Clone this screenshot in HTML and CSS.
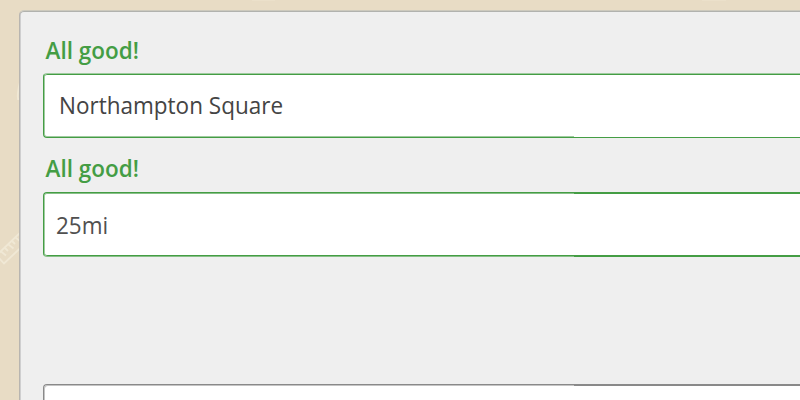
FILE: index.html
```html
<!DOCTYPE html>
<html lang="en">
<head>
<meta charset="utf-8">
<title>Location search</title>
<link rel="stylesheet" href="styles.css">
</head>
<body>
<svg class="doodles" width="800" height="400" viewBox="0 0 800 400" aria-hidden="true">
<path d="M-2 257 L4 263.5 L24 244.5 M-2 254 L24 229 M1 251.5 l5 4 M5 248 l3 3 M8.500 244.500 l5 4 M12 241 l3 3 M15.500 237.500 l5 4"/>
<path d="M20 82 Q17 94 18 99 L22 99"/>
<path class="thin" d="M252 .5 H275 M702 .5 H726"/>
</svg>
<main class="panel">
<form class="form">
<label class="message" for="place">All good!</label>
<div class="field place"><input id="place" type="text" value="Northampton Square"></div>
<label class="message" for="radius">All good!</label>
<div class="field radius"><input id="radius" type="text" value="25mi"></div>
<div class="field next"></div>
</form>
</main>
</body>
</html>
```
FILE: styles.css
```css
* { box-sizing: border-box; }
body {
  display: flow-root;
  margin: 0;
  height: 400px;
  overflow: hidden;
  background: #e8dcc5;
  font-family: "Open Sans", sans-serif;
}
.doodles {
  position: absolute;
  inset: 0;
  fill: none;
  stroke: #f0e8d5;
  stroke-width: 1.8;
}
.doodles .thin { stroke: #ebe0ca; stroke-width: 1; }
.panel {
  position: relative;
  height: 390px;
  margin: 10px 0 0 19px;
  padding: 24px 0 0 22px;
  border: solid;
  border-width: 1px 0 0 1px;
  border-color: #ccc9bd #b7b7b7 #b7b7b7 #b8b5b0;
  border-radius: 5px 0 0 0;
  background: #efefef;
  box-shadow: inset 0 1px #b1b2ae, inset 1px 0 #cfcfd0;
}
.form { display: flex; flex-direction: column; padding-left: 1px; }
.message {
  height: 30px;
  padding-left: 2.5px;
  color: #449d44;
  font-size: 22.5px;
  font-weight: 600;
  line-height: 30px;
  transform: translateY(.3px) scaleY(1.07);
}
.field {
  position: relative;
  height: 65px;
  border: 1px solid #449d44;
  border-right: 0;
  border-radius: 4px 0 0 4px;
  background: #fff;
}
.field input {
  display: block;
  width: 100%;
  height: 61px;
  padding: 0 15px;
  border: 0;
  outline: 0;
  background: none;
  color: #444;
  font: 400 22.5px/30px "Open Sans", sans-serif;
  transform: translateY(.3px) scaleY(1.07);
}
.field::after {
  content: "";
  position: absolute;
  inset: 0 0 0 530px;
  pointer-events: none;
}
.place {
  margin: 8px 0 15px;
  border-top-color: #a0cba0;
  box-shadow: inset 1px 0 #a0cba0, inset 0 1px #449d44, inset 0 -1px #a0cba0;
}
.place::after { border-bottom: 1px solid #fff; }
.radius {
  margin-top: 9px;
  border-bottom-color: #88bf88;
  box-shadow: inset 1px 0 #a0cba0, inset 0 1px #88bf88, inset 0 -1px #449d44;
}
.radius input { padding: 2px 12px 0; color: #505050; }
.radius::after {
  bottom: -1px;
  border: solid #449d44;
  border-width: 1px 0;
}
.next {
  height: 16px;
  margin-top: 127px;
  border-color: #898989;
  border-bottom: 0;
  border-radius: 4px 0 0 0;
  box-shadow: inset 1px 1px #c4c4c4;
}
.next::after { border-top: 1px solid #898989; }
```
